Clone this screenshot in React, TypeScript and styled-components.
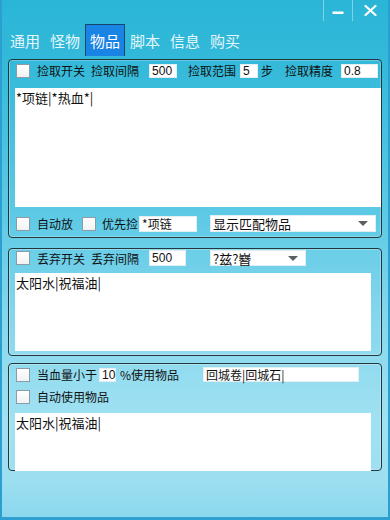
import React from 'react'
import styled, { createGlobalStyle } from 'styled-components'

const GlobalStyle = createGlobalStyle`
    html, body {
        margin: 0;
        padding: 0;
        background: #ffffff;
    }
    * {
        box-sizing: border-box;
    }
`

const Window = styled.div`
    width: 390px;
    height: 520px;
    display: flex;
    flex-direction: column;
    border-left: 2px solid #2a9fd0;
    border-right: 2px solid #2a9fd0;
    border-bottom: 3px solid #2d9fd0;
    background: linear-gradient(180deg, #2ab5d7 0px, #33b9d9 60px, #5fcae5 220px, #86d7ed 320px, #a0e1f2 420px, #9ddff1 480px, #8cd8ee 515px);
    font-family: "Noto Sans CJK SC", "Noto Sans", sans-serif;
    overflow: hidden;
`

const TitleBar = styled.div`
    height: 24px;
    display: flex;
    justify-content: flex-end;
`

const TitleButton = styled.div<{ $w: number }>`
    width: ${p => p.$w}px;
    height: 21px;
    display: flex;
    align-items: center;
    justify-content: center;
    border-left: 1px solid rgba(190, 236, 248, 0.55);
`

const TabBar = styled.div`
    height: 32px;
    display: flex;
    align-items: stretch;
    padding-left: 3px;
`

const Tab = styled.div<{ $active?: boolean }>`
    width: 40px;
    display: flex;
    align-items: center;
    justify-content: center;
    font-size: 15px;
    color: ${p => p.$active ? '#ffffff' : '#e4f6fb'};
    background: ${p => p.$active ? '#1a84e4' : 'transparent'};
    border: 1px solid ${p => p.$active ? '#16456e' : 'transparent'};
    border-bottom: none;
`

const Group = styled.div<{ $mt: number; $pt: number; $pb: number }>`
    margin: ${p => p.$mt}px 6px 0 6px;
    padding: ${p => p.$pt}px 0 ${p => p.$pb}px 0;
    border: 1px solid #22363c;
    border-radius: 4px;
    box-shadow: inset 0 0 0 1px rgba(255, 255, 255, 0.25);
    display: flex;
    flex-direction: column;
`

const Row = styled.div<{ $h: number; $mt?: number }>`
    height: ${p => p.$h}px;
    margin-top: ${p => p.$mt ?? 0}px;
    padding-left: 7px;
    display: flex;
    align-items: center;
`

const Check = styled.span<{ $ml?: number }>`
    width: 14px;
    height: 14px;
    flex: none;
    margin-left: ${p => p.$ml ?? 0}px;
    background: linear-gradient(180deg, #ffffff, #f0f2f3);
    border: 1px solid #8c9ca6;
`

const Label = styled.span<{ $ml?: number }>`
    margin-left: ${p => p.$ml ?? 0}px;
    font-size: 12px;
    line-height: 15px;
    color: #111;
    white-space: nowrap;
`

const Field = styled.div<{ $ml?: number; $w: number; $h?: number; $cjk?: boolean }>`
    margin-left: ${p => p.$ml ?? 0}px;
    width: ${p => p.$w}px;
    height: ${p => p.$h ?? 14}px;
    flex: none;
    display: flex;
    align-items: center;
    background: #ffffff;
    border: 1px solid #e2eef2;
    padding-left: 2px;
    font-family: ${p => p.$cjk ? '"Noto Sans CJK SC", sans-serif' : '"Liberation Sans", Arial, sans-serif'};
    font-size: 12px;
    line-height: 12px;
    color: #111;
    white-space: nowrap;
`

const Select = styled.div<{ $ml: number; $w: number; $h: number }>`
    margin-left: ${p => p.$ml}px;
    width: ${p => p.$w}px;
    height: ${p => p.$h}px;
    flex: none;
    background: #ffffff;
    border: 1px solid #e2eef2;
    padding: 0 7px 0 2px;
    display: flex;
    align-items: center;
    justify-content: space-between;
    font-size: 13px;
    color: #111;
`

const Arrow = styled.span`
    width: 0;
    height: 0;
    border-left: 5px solid transparent;
    border-right: 5px solid transparent;
    border-top: 5px solid #5a5f63;
`

const Memo = styled.textarea<{ $h: number; $w: number; $mt: number; $mb?: number }>`
    display: block;
    width: ${p => p.$w}px;
    height: ${p => p.$h}px;
    margin: ${p => p.$mt}px 0 ${p => p.$mb ?? 0}px 6px;
    padding: 1px 1px;
    border: none;
    outline: none;
    resize: none;
    overflow: hidden;
    background: #ffffff;
    font-family: "Noto Sans CJK SC", sans-serif;
    font-size: 13px;
    line-height: 17px;
    color: #111;
`

const tabs = ['通用', '怪物', '物品', '脚本', '信息', '购买']

const App: React.FC = () => {
    return (
        <>
            <GlobalStyle />
            <Window>
                <TitleBar>
                    <TitleButton $w={29}>
                        <svg width="12" height="10" viewBox="0 0 12 10">
                            <rect x="0.5" y="5.5" width="11" height="2.5" fill="#ffffff" />
                        </svg>
                    </TitleButton>
                    <TitleButton $w={36}>
                        <svg width="13" height="11" viewBox="0 0 13 11">
                            <path d="M1.5 1 L11.5 10 M11.5 1 L1.5 10" stroke="#ffffff" strokeWidth="2.2" strokeLinecap="round" />
                        </svg>
                    </TitleButton>
                </TitleBar>

                <TabBar>
                    {tabs.map(t => (
                        <Tab key={t} $active={t === '物品'}>{t}</Tab>
                    ))}
                </TabBar>

                <Group $mt={3} $pt={3} $pb={5}>
                    <Row $h={15}>
                        <Check />
                        <Label $ml={7}>捡取开关</Label>
                        <Label $ml={6}>捡取间隔</Label>
                        <Field $ml={10} $w={28}>500</Field>
                        <Label $ml={11}>捡取范围</Label>
                        <Field $ml={4} $w={18}>5</Field>
                        <Label $ml={3}>步</Label>
                        <Label $ml={12}>捡取精度</Label>
                        <Field $ml={8} $w={37}>0.8</Field>
                    </Row>
                    <Memo $w={366} $h={119} $mt={10} readOnly defaultValue="*项链|*热血*|" />
                    <Row $h={17} $mt={8}>
                        <Check />
                        <Label $ml={7}>自动放</Label>
                        <Check $ml={9} />
                        <Label $ml={6}>优先捡</Label>
                        <Field $ml={1} $w={58} $h={16} $cjk>*项链</Field>
                        <Select $ml={13} $w={166} $h={17}>
                            <span>显示匹配物品</span>
                            <Arrow />
                        </Select>
                    </Row>
                </Group>

                <Group $mt={10} $pt={1} $pb={4}>
                    <Row $h={16}>
                        <Check />
                        <Label $ml={7}>丢弃开关</Label>
                        <Label $ml={6}>丢弃间隔</Label>
                        <Field $ml={10} $w={37} $h={16}>500</Field>
                        <Select $ml={24} $w={96} $h={16}>
                            <span>?兹?嶜</span>
                            <Arrow />
                        </Select>
                    </Row>
                    <Memo $w={356} $h={78} $mt={7} readOnly defaultValue="太阳水|祝福油|" />
                </Group>

                <Group $mt={7} $pt={3} $pb={0}>
                    <Row $h={15}>
                        <Check />
                        <Label $ml={7}>当血量小于</Label>
                        <Field $ml={2} $w={17}>10</Field>
                        <Label $ml={4}>%使用物品</Label>
                        <Field $ml={24} $w={156} $h={15} $cjk>回城卷|回城石|</Field>
                    </Row>
                    <Row $h={15} $mt={7}>
                        <Check />
                        <Label $ml={7}>自动使用物品</Label>
                    </Row>
                    <Memo $w={356} $h={58} $mt={9} $mb={-1} readOnly defaultValue="太阳水|祝福油|" />
                </Group>
            </Window>
        </>
    )
}

export default App
